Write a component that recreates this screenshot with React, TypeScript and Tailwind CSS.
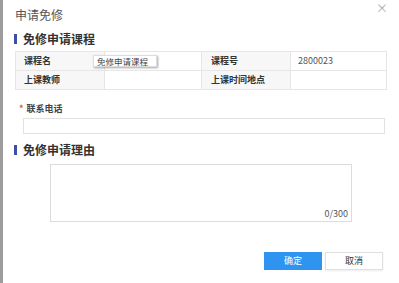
import * as React from "react"

const font = { fontFamily: '"Noto Sans CJK SC", "Noto Sans", sans-serif' }

function SectionTitle({ children }: { children: React.ReactNode }) {
    return (
        <div className="flex items-center h-[17px] pl-[11px]">
            <span className="w-[3px] h-[10px] bg-[#3d4fa3]" />
            <span className="ml-[6px] text-[12px] font-bold text-[#333] leading-none">{children}</span>
        </div>
    )
}

export default function App() {
    return (
        <div className="flex w-[399px] h-[283px] bg-white overflow-hidden" style={font}>
            <div className="w-[3px] h-full bg-[#9c9c9c]" />
            <div className="flex-1 flex flex-col relative">
                {/* header */}
                <div className="flex items-center justify-between h-[30px] pl-[12px] pr-[11px]">
                    <span className="text-[12px] text-[#555] leading-none">申请免修</span>
                    <span className="text-[12px] text-[#aaa] leading-none -mt-[14px]">×</span>
                </div>

                <SectionTitle>免修申请课程</SectionTitle>

                {/* course table */}
                <div className="relative mt-[4px] ml-[12px] w-[372px] border border-[#e6e6e6] text-[9px] text-[#333]">
                    <div className="grid grid-cols-[89px_97px_89px_1fr] h-[19px] border-b border-[#e6e6e6]">
                        <div className="bg-[#f7f7f7] border-r border-[#e6e6e6] flex items-center pl-[8px] font-bold">课程名</div>
                        <div className="border-r border-[#e6e6e6]" />
                        <div className="bg-[#f7f7f7] border-r border-[#e6e6e6] flex items-center pl-[9px] font-bold">课程号</div>
                        <div className="flex items-center pl-[7px] text-[#555]">2800023</div>
                    </div>
                    <div className="grid grid-cols-[89px_97px_89px_1fr] h-[18px]">
                        <div className="bg-[#f7f7f7] border-r border-[#e6e6e6] flex items-center pl-[8px] font-bold">上课教师</div>
                        <div className="border-r border-[#e6e6e6]" />
                        <div className="bg-[#f7f7f7] border-r border-[#e6e6e6] flex items-center pl-[9px] font-bold">上课时间地点</div>
                        <div />
                    </div>
                    <div className="absolute left-[77px] top-[3px] w-[64px] h-[12px] pl-[3px] bg-white shadow-[1px_1px_2px_rgba(0,0,0,0.35)] border border-[#ddd] text-[8.5px] text-[#444] leading-[10px]">
                        免修申请课程
                    </div>
                </div>

                {/* phone */}
                <div className="flex items-center mt-[13px] pl-[16px] h-[12px] text-[9px] font-bold text-[#444]">
                    <span className="text-[#e05050] mr-[3px]">*</span>联系电话
                </div>
                <div className="mt-[3px] ml-[20px] w-[362px] h-[16px] border border-[#e2e2e2]" />

                <div className="mt-[7px]">
                    <SectionTitle>免修申请理由</SectionTitle>
                </div>

                {/* reason */}
                <div className="relative mt-[6px] ml-[47px] w-[302px] h-[58px] border border-[#dcdcdc]">
                    <span className="absolute right-[3px] bottom-[3px] text-[9px] text-[#555] leading-none">0/300</span>
                </div>

                {/* actions */}
                <div className="flex justify-end gap-[3px] mt-[30px] pr-[16px]">
                    <button className="w-[58px] h-[18px] bg-[#2f93f0] text-white text-[9px]">确定</button>
                    <button className="w-[58px] h-[18px] bg-white border border-[#e0e0e0] text-[#333] text-[9px] shadow-[0_1px_2px_rgba(0,0,0,0.08)]">取消</button>
                </div>
            </div>
        </div>
    )
}
